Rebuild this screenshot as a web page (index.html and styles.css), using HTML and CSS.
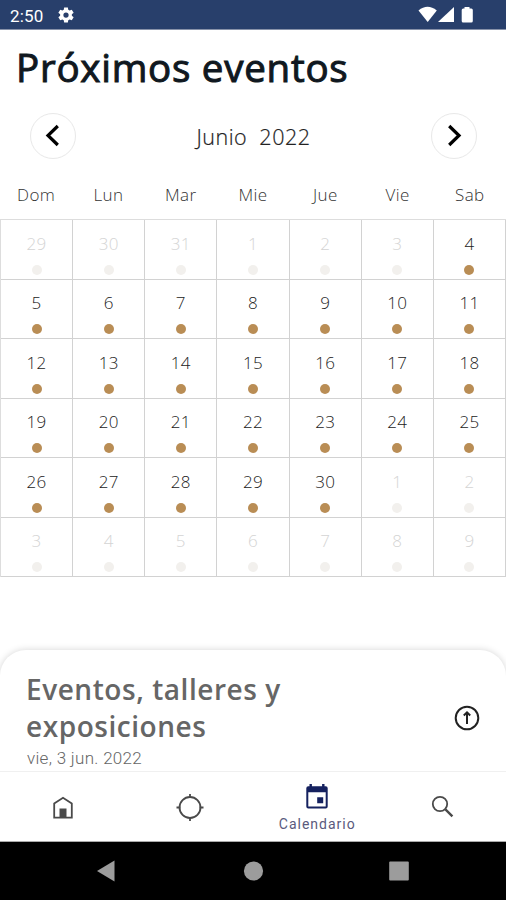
FILE: index.html
```html
<!DOCTYPE html>
<html lang="es">

<head>
    <meta charset="utf-8">
    <meta name="viewport" content="initial-scale=1, width=device-width">
    <title>Próximos eventos</title>
    <link rel="stylesheet" href="styles.css">
</head>

<body onLoad="init();">
    <div class="screen">
        <div class="status">
            <span class="clock">2:50</span>
            <svg class="gear" viewBox="0 0 24 24"><path fill-rule="evenodd" d="M9.5 2h5l.5 3 1.800 1 2.900-1.100 2.500 4.200-2.400 2v1.800l2.400 2-2.500 4.200-2.900-1.100-1.800 1-.5 3h-5L9 19l-1.800-1-2.900 1.100-2.500-4.200 2.400-2v-1.800l-2.400-2 2.500-4.200L7.200 6 9 5zM12 8.500a3.500 3.500 0 1 0 0 7a3.500 3.500 0 1 0 0-7z"/></svg>
            <svg class="signals" viewBox="0 0 56 20">
                <path d="M0.500 5.500Q9.500-2 18.800 5.500L9.700 17z"/>
                <path d="M36 2v15H20z"/>
                <path d="M46.500 2h5v1.500h1.800q1.500 0 1.500 1.500v11q0 1.500-1.500 1.500h-8.100q-1.500 0-1.500-1.500V5q0-1.500 1.500-1.500h1.300z"/>
            </svg>
        </div>

        <h1 class="title">Próximos eventos</h1>

        <div class="month">
            <div class="arrow"><svg viewBox="0 0 24 24"><path d="M16.800 2L7 11.500l9.800 9.500"/></svg></div>
            <div class="name">Junio&nbsp; 2022</div>
            <div class="arrow"><svg viewBox="0 0 24 24"><path d="M7.200 2l9.800 9.500L7.200 21"/></svg></div>
        </div>

        <div class="weekdays">
            <div>Dom</div>
            <div>Lun</div>
            <div>Mar</div>
            <div>Mie</div>
            <div>Jue</div>
            <div>Vie</div>
            <div>Sab</div>
        </div>
        <div id="days" class="days"></div>

        <div class="sheet-wrap">
            <div class="sheet">
                <div class="info">
                    <div class="head">Eventos, talleres y<br>exposiciones</div>
                    <div class="date">vie, 3 jun. 2022</div>
                </div>
                <svg class="up" viewBox="0 0 26 26"><circle cx="13" cy="13" r="11.300"/><path d="M13 19V7.500M9.800 10.500L13 7.300l3.200 3.200"/></svg>
            </div>
        </div>

        <div class="tabs">
            <div class="tab">
                <svg width="26" height="26" viewBox="0 0 26 26"><path class="line" d="M4.200 22.700V8.500L13 2.800l8.800 5.700v14.200z"/><path class="fill" d="M9.500 13.500h7v9h-7z"/></svg>
            </div>
            <div class="tab">
                <svg width="28" height="28" viewBox="0 0 28 28"><circle class="line" cx="14" cy="13.500" r="10.500"/><path class="line" d="M14 0v4M14 23v4M.5 13.500h4M23.500 13.500h4"/></svg>
            </div>
            <div class="tab active">
                <svg width="24" height="26" viewBox="0 0 24 26"><path fill-rule="evenodd" d="M4.500 0h2.400v2.200h10.200V0h2.400v2.200h1.200q2 0 2 2V22.500q0 2-2 2H3.300q-2 0-2-2V4.200q0-2 2-2h1.200zM3.300 8.200v14.300h17.400V8.200zM12.200 13.200h6v6h-6z"/></svg>
                <div class="label">Calendario</div>
            </div>
            <div class="tab">
                <svg width="26" height="26" viewBox="0 0 26 26"><circle class="line" cx="10" cy="9" r="7.200"/><path class="thick" d="M15.400 14.400l7 7"/></svg>
            </div>
        </div>

        <div class="navbar">
            <svg width="24" height="24" viewBox="0 0 24 24"><path d="M4 12L21.500 1.500v21z"/></svg>
            <svg width="24" height="24" viewBox="0 0 24 24"><circle cx="13.500" cy="12" r="9.600"/></svg>
            <svg width="24" height="24" viewBox="0 0 24 24"><rect x="2.200" y="2.500" width="19.600" height="19" rx="1"/></svg>
        </div>
    </div>
    <script type="text/javascript">
        function init() {
            var html = '';
            for (var i = 0; i < 42; i++) {
                // the first row starts on may 29
                var day = i < 3 ? 29 + i : (i < 33 ? i - 2 : i - 32);
                var cls = i < 6 || i > 32 ? 'day off' : 'day';
                html += '<div class="' + cls + '"><span>' + day + '</span><i class="dot"></i></div>';
            }
            document.getElementById('days').innerHTML = html;
        }
    </script>
</body>

</html>
```
FILE: styles.css
```css
* {
    margin: 0;
    padding: 0;
    box-sizing: border-box;
}

body {
    background: #ffffff;
    font-family: "Open Sans", sans-serif;
}

.screen {
    width: 506px;
    height: 900px;
    overflow: hidden;
    display: flex;
    flex-direction: column;
}

.status {
    height: 30px;
    flex: none;
    padding: 1px 32px 0 10px;
    display: flex;
    align-items: center;
    background: #283f6b;
    border-bottom: 1px solid #8892a9;
    color: #ffffff;
    font-family: Roboto, sans-serif;
}

.clock {
    width: 47px;
    padding-top: 2px;
    font-size: 17px;
    letter-spacing: 0.2px;
}

.gear {
    width: 18px;
    height: 18px;
    fill: #ffffff;
}

.signals {
    width: 56px;
    height: 20px;
    margin-left: auto;
    fill: #ffffff;
}

.title {
    height: 83px;
    flex: none;
    padding: 13px 0 0 16px;
    color: #101820;
    font-size: 38.500px;
    font-weight: 400;
    line-height: 48px;
    letter-spacing: 0.750px;
    -webkit-text-stroke: 1px #101820;
}

.month {
    height: 46px;
    flex: none;
    padding: 0 29px 0 30px;
    display: flex;
    align-items: center;
    justify-content: space-between;
}

.arrow {
    width: 46px;
    height: 46px;
    border: 1px solid #e8e8e8;
    border-radius: 50%;
    display: flex;
    align-items: center;
    justify-content: center;
}

.arrow svg {
    width: 24px;
    height: 24px;
    fill: none;
    stroke: #000000;
    stroke-width: 3.200;
}

.name {
    color: #222222;
    font-size: 21.500px;
    font-weight: 300;
    letter-spacing: 0.5px;
    -webkit-text-stroke: 0.2px #222222;
}

.weekdays {
    height: 60px;
    flex: none;
    padding-top: 25px;
    display: grid;
    grid-template-columns: repeat(7, 1fr);
    color: #333333;
    font-size: 17px;
    font-weight: 300;
    line-height: 22px;
    text-align: center;
    letter-spacing: 0.4px;
}

.days {
    height: 358px;
    flex: none;
    display: grid;
    grid-template-columns: repeat(7, 1fr);
    grid-template-rows: repeat(6, 1fr);
    border-top: 1px solid #dddddd;
    border-left: 1px solid #dddddd;
}

.day {
    padding-top: 13.500px;
    display: flex;
    flex-direction: column;
    align-items: center;
    border-right: 1px solid #d2d2d2;
    border-bottom: 1px solid #d2d2d2;
    color: #222222;
    font-size: 17px;
    font-weight: 300;
    line-height: 20px;
    letter-spacing: 0.3px;
}

.dot {
    width: 10px;
    height: 10px;
    margin-top: 11px;
    border-radius: 50%;
    background: #b98d55;
}

.off {
    color: #d4d4d4;
}

.off .dot {
    background: #f2f0ed;
}

.sheet-wrap {
    height: 194px;
    flex: none;
    padding-top: 73px;
    overflow: hidden;
}

.sheet {
    height: 150px;
    padding: 21px 26px 0 26px;
    display: flex;
    justify-content: space-between;
    border-radius: 26px;
    box-shadow: 0 0 7px rgba(0, 0, 0, 0.17);
}

.head {
    color: #666666;
    font-size: 28px;
    font-weight: 600;
    line-height: 37px;
    letter-spacing: 0.550px;
}

.date {
    margin-top: 3px;
    padding-left: 1px;
    color: #666666;
    font-family: Roboto, sans-serif;
    font-size: 17px;
    font-weight: 300;
    line-height: 20px;
    letter-spacing: 0.3px;
}

.up {
    width: 26px;
    height: 26px;
    margin-top: 34px;
    fill: none;
    stroke: #222222;
    stroke-width: 2;
}

.tabs {
    height: 71px;
    flex: none;
    padding-top: 2px;
    display: grid;
    grid-template-columns: repeat(4, 1fr);
    border-top: 1px solid #f0f0f0;
    border-bottom: 1px solid #aaaaaa;
}

.tab {
    display: flex;
    flex-direction: column;
    align-items: center;
    justify-content: center;
}

.line,
.thick {
    fill: none;
    stroke: #4a4a4a;
    stroke-width: 1.800;
}

.thick {
    stroke-width: 2.400;
}

.fill {
    fill: #4a4a4a;
}

.active {
    padding-left: 2px;
}

.active svg {
    fill: #15215f;
}

.label {
    margin-top: 6px;
    color: #5a5a7d;
    font-family: Roboto, sans-serif;
    font-size: 14px;
    line-height: 16px;
    letter-spacing: 1px;
}

.navbar {
    height: 58px;
    flex: none;
    padding: 0 95px 0 93px;
    display: flex;
    align-items: center;
    justify-content: space-between;
    background: #000000;
    fill: #9c9c9c;
}
```
